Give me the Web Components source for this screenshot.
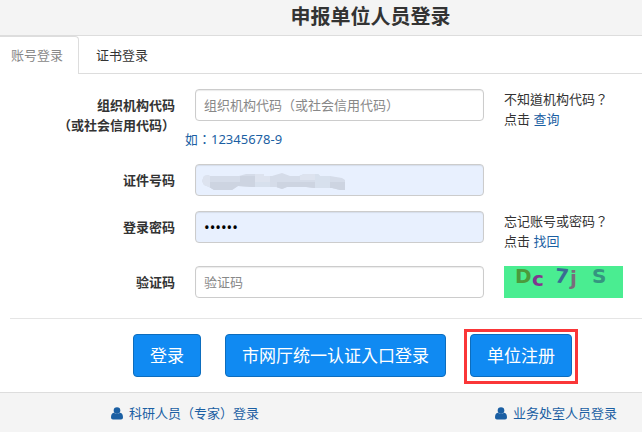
<!DOCTYPE html>
<html>
<head>
<meta charset="utf-8">
<title>申报单位人员登录</title>
<style>
  body {
    margin: 0;
    background: #fff;
    color: #333;
    font: 13px/20px "Noto Sans", "Noto Sans CJK TC", sans-serif;
  }
</style>
</head>
<body>
<login-panel></login-panel>

<script>
class LoginTabs extends HTMLElement {
  constructor() {
    super();
    this.attachShadow({mode: 'open'}).innerHTML = `
      <style>
        :host {
          display: flex;
          height: 37px;
          border-bottom: 1px solid #ddd;
        }
        button {
          box-sizing: border-box;
          height: 38px;
          margin: 0 1px 0 0;
          padding: 0 15px 2px;
          border: 1px solid transparent;
          border-bottom: 0;
          background: none;
          color: #333;
          font: inherit;
        }
        button.active {
          padding-left: 11px;
          border-color: #ddd;
          border-left: 0;
          border-radius: 0 4px 0 0;
          background: #fff;
          color: #888;
        }
      </style>
      <button type="button" class="active">账号登录</button>
      <button type="button">证书登录</button>
    `;
  }
}

class FormField extends HTMLElement {
  constructor() {
    super();
    this.attachShadow({mode: 'open'});
  }
  connectedCallback() {
    const type = this.getAttribute('type') || 'text';
    const placeholder = this.getAttribute('placeholder') || '';
    const value = this.getAttribute('value') || '';
    const label = this.getAttribute('label').split('|').join('<br>');
    this.shadowRoot.innerHTML = `
      <style>
        :host {
          display: grid;
          grid-template-columns: 185fr 309fr 148fr;
        }
        label {
          padding: 6px 10px 0 0;
          text-align: right;
          font-weight: bold;
        }
        .control {
          position: relative;
          margin: 0 10px;
        }
        input {
          display: block;
          box-sizing: border-box;
          width: 100%;
          height: 32px;
          padding: 0 8px;
          border: 1px solid #ccc;
          border-radius: 4px;
          background: #fff;
          box-shadow: inset 0 1px 1px rgba(0,0,0,0.08);
          color: #000;
          font: inherit;
        }
        input[type="password"] {
          font-size: 15px;
        }
        input::placeholder {
          color: #888;
        }
        :host([filled]) input {
          background: #e8f0fe;
        }
        ::slotted([slot="example"]) {
          display: block;
          margin-top: 8px;
          color: #1b5fa3;
        }
        ::slotted([slot="mask"]) {
          position: absolute;
          left: 7px;
          top: 8px;
        }
      </style>
      <label for="field">${label}</label>
      <div>
        <div class="control">
          <input id="field" type="${type}" placeholder="${placeholder}" value="${value}">
          <slot name="mask"></slot>
        </div>
        <slot name="example"></slot>
      </div>
      <div><slot></slot></div>
    `;
  }
}

class HelpNote extends HTMLElement {
  constructor() {
    super();
    this.attachShadow({mode: 'open'}).innerHTML = `
      <style>
        :host {
          display: block;
          padding-left: 10px;
        }
        ::slotted(a) {
          color: #1b5fa3;
          text-decoration: none;
        }
      </style>
      <slot></slot>
    `;
  }
}

class CaptchaImage extends HTMLElement {
  constructor() {
    super();
    this.attachShadow({mode: 'open'}).innerHTML = `
      <style>
        :host {
          display: block;
          padding-left: 10px;
        }
        svg {
          display: block;
          overflow: visible;
          background: #4aed91;
          font: bold 20px "DejaVu Sans", sans-serif;
        }
      </style>
      <svg width="119" height="32" viewBox="0 0 119 32">
        <text x="11" y="17" fill="#4c9a3c">D</text>
        <text x="28" y="20" fill="#81368f">c</text>
        <text x="51" y="17" fill="#3a6c93" transform="rotate(6 58 9)">7</text>
        <text x="66" y="19" fill="#796c7c">j</text>
        <text x="88" y="17" fill="#359580">S</text>
      </svg>
    `;
  }
}

// pixelated smear over the id number
class MaskSmear extends HTMLElement {
  constructor() {
    super();
    this.attachShadow({mode: 'open'}).innerHTML = `
      <style>
        :host { pointer-events: none; }
        svg { display: block; }
      </style>
      <svg width="144" height="20" viewBox="0 0 144 20" shape-rendering="crispEdges">
        <defs>
          <clipPath id="smear">
            <path d="M0 9 2 4 6 3 8 4H37L44 2H62V4L70 4 80 1 88 4H97L102 2H116L118 4 128 4 140 6 143 8V18H138L130 16H112L104 15H85L80 17 74 15H50L36 14 30 18H12L7 15 2 13Z"/>
          </clipPath>
        </defs>
        <g clip-path="url(#smear)">
          <path fill="#d5dce9" d="M0 0h144v20H0z"/>
          <path fill="#dde3ef" d="M0 0h8v20H0zM53 0h15v10H53zM98 0h15v8H98z"/>
          <path fill="#d7e0ed" d="M53 10h15v10H53zM113 0h15v20h-15z"/>
          <path fill="#cdd4e1" d="M8 10h30v10H8zM38 4h15v11H38zM75 10h38v10H75zM128 10h16v10h-16z"/>
        </g>
      </svg>
    `;
  }
}

class ActionButton extends HTMLElement {
  constructor() {
    super();
    this.attachShadow({mode: 'open'}).innerHTML = `
      <style>
        :host {
          display: block;
          position: relative;
        }
        button {
          display: block;
          height: 43px;
          padding: 0 16px;
          border: 1px solid #0d6dbd;
          border-radius: 4px;
          background: #108af2;
          color: #fff;
          font: inherit;
          font-size: 17px;
          white-space: nowrap;
        }
        :host([marked])::after {
          content: "";
          position: absolute;
          inset: -5px -6px -7px;
          border: 3px solid #fa3638;
          pointer-events: none;
        }
      </style>
      <button type="button"><slot></slot></button>
    `;
  }
}

class UserLink extends HTMLElement {
  constructor() {
    super();
    this.attachShadow({mode: 'open'}).innerHTML = `
      <style>
        :host { display: block; }
        a {
          display: flex;
          align-items: center;
          gap: 6px;
          color: #1b5fa3;
          text-decoration: none;
          white-space: nowrap;
        }
      </style>
      <a href="#">
        <svg width="12" height="13" viewBox="0 0 12 13" fill="currentColor">
          <circle cx="6" cy="3.6" r="3.3"/>
          <path d="M2.8 5.8Q6 8 9.2 5.8C11.2 6.2 12 8 12 10.4Q12 12.5 10 12.5H2Q0 12.5 0 10.4C0 8 .8 6.2 2.8 5.8Z"/>
        </svg>
        <slot></slot>
      </a>
    `;
  }
}

class LoginPanel extends HTMLElement {
  constructor() {
    super();
    this.attachShadow({mode: 'open'}).innerHTML = `
      <style>
        :host { display: block; }
        header, footer { background: #f4f4f4; }
        header {
          padding: 2px 0 3px 99px;
          border-bottom: 1px solid #ddd;
        }
        h1 {
          margin: 0;
          text-align: center;
          font-size: 20px;
          line-height: 30px;
        }
        form {
          display: flex;
          flex-direction: column;
          gap: 15px;
          padding: 15px 0 20px;
        }
        .actions {
          display: flex;
          justify-content: center;
          gap: 24px;
          margin-left: 10px;
          padding: 15px 0 15px 53px;
          border-top: 1px solid #e5e5e5;
        }
        footer {
          display: flex;
          justify-content: space-between;
          padding: 10px 25px 10px 111px;
          border-top: 1px solid #ddd;
        }
      </style>
      <header><h1>申报单位人员登录</h1></header>
      <login-tabs></login-tabs>
      <form>
        <form-field label="组织机构代码|（或社会信用代码）" placeholder="组织机构代码（或社会信用代码）">
          <span slot="example">如：12345678-9</span>
          <help-note>不知道机构代码？<br>点击 <a href="#">查询</a></help-note>
        </form-field>
        <form-field label="证件号码" filled>
          <mask-smear slot="mask"></mask-smear>
        </form-field>
        <form-field label="登录密码" type="password" value="123456" filled>
          <help-note>忘记账号或密码？<br>点击 <a href="#">找回</a></help-note>
        </form-field>
        <form-field label="验证码" placeholder="验证码">
          <captcha-image></captcha-image>
        </form-field>
      </form>
      <div class="actions">
        <action-button>登录</action-button>
        <action-button>市网厅统一认证入口登录</action-button>
        <action-button marked>单位注册</action-button>
      </div>
      <footer>
        <user-link>科研人员（专家）登录</user-link>
        <user-link>业务处室人员登录</user-link>
      </footer>
    `;
  }
}

customElements.define('login-tabs', LoginTabs);
customElements.define('form-field', FormField);
customElements.define('help-note', HelpNote);
customElements.define('captcha-image', CaptchaImage);
customElements.define('mask-smear', MaskSmear);
customElements.define('action-button', ActionButton);
customElements.define('user-link', UserLink);
customElements.define('login-panel', LoginPanel);
</script>
</body>
</html>
